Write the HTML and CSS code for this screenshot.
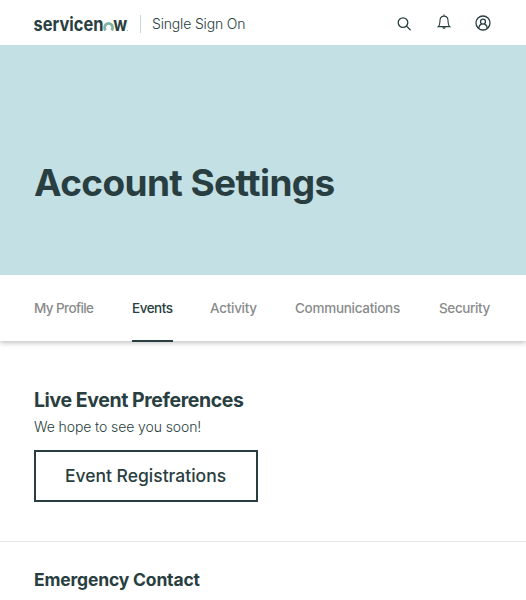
FILE: index.html
```html
<!DOCTYPE html>
<html lang="en">
<head>
<meta charset="utf-8">
<title>Account Settings</title>
<link rel="stylesheet" href="styles.css">
</head>
<body>
<header class="topbar">
  <svg class="logo" width="96" height="24" viewBox="0 0 96 24" aria-label="servicenow">
    <text class="logo-text" x="-0.5" y="18" textLength="70" lengthAdjust="spacingAndGlyphs">servicen</text>
    <path class="logo-o" d="M71.6 17.4A4 4.2 0 1 1 77.6 17.4"/>
    <text class="logo-text" x="79.2" y="18" textLength="14" lengthAdjust="spacingAndGlyphs">w</text>
    <circle class="logo-dot" cx="93.6" cy="17.5" r=".6"/>
  </svg>
  <span class="product">Single Sign On</span>
  <nav class="tools">
    <svg class="icon search" width="16" height="16" viewBox="0 0 16 16"><circle cx="7" cy="6.6" r="4.8"/><path d="M10.5 10.1L14.2 13.8"/></svg>
    <svg class="icon bell" width="16" height="16" viewBox="0 0 16 16"><path d="M8 .8V2M2.2 12.6C4.3 10.8 3.8 8.5 4 6.2C4.2 3.7 5.8 2.1 8 2.1S11.8 3.7 12 6.2C12.2 8.5 11.7 10.8 13.8 12.6Z"/><path class="solid" d="M6.3 13.2H9.7C9.4 15.4 6.6 15.4 6.3 13.2Z"/></svg>
    <svg class="icon user" width="16" height="16" viewBox="0 0 16 16"><circle cx="8" cy="8" r="7"/><circle cx="8" cy="6.6" r="2.5"/><path d="M3.7 13.2C4 10.7 5.2 9.4 6.5 8.8M9.5 8.8C10.8 9.4 12 10.7 12.3 13.2"/></svg>
  </nav>
</header>
<section class="hero"><h1>Account Settings</h1></section>
<nav class="tabs">
  <a class="tab profile">My Profile</a>
  <a class="tab active">Events</a>
  <a class="tab activity">Activity</a>
  <a class="tab comms">Communications</a>
  <a class="tab security">Security</a>
</nav>
<main>
  <section class="events">
    <h2>Live Event Preferences</h2>
    <p>We hope to see you soon!</p>
    <button class="registrations">Event Registrations</button>
  </section>
  <section class="contact"><h2>Emergency Contact</h2></section>
</main>
</body>
</html>
```
FILE: styles.css
```css
* { box-sizing: border-box; }
html { overflow: hidden; }
body { margin: 0; background: #fff; color: #293e40; font-family: Inter, "Liberation Sans", sans-serif; white-space: nowrap; }
h1, h2, p { margin: 0; }
.topbar { height: 45px; display: flex; align-items: center; padding: 0 35px 0 34px; }
.logo { display: block; flex: none; margin-top: 4px; }
.logo-text { font: 750 19px Inter, sans-serif; fill: #293e40; }
.logo-o { fill: none; stroke: #81b5a1; stroke-width: 2.8; }
.logo-dot { fill: #81b5a1; }
.product { height: 18px; line-height: 18px; margin: 2px 0 0 10px; padding-left: 11px; border-left: 1px solid #cbd6d5; font-size: 14px; font-weight: 300; letter-spacing: -.17px; }
.tools { display: flex; align-items: flex-start; gap: 24px; margin-left: auto; }
.icon { display: block; fill: none; stroke: #293e40; stroke-width: 1.3; stroke-linecap: round; }
.icon .solid { fill: #293e40; stroke: none; }
.search { margin-top: 2px; }
.bell { stroke-width: 1.1; margin-right: -1px; }
.user { margin-top: 1px; }
.hero { height: 230px; background: #c3e0e5; padding: 115px 0 0 34px; }
.hero h1 { font-size: 37px; line-height: 46px; font-weight: 650; letter-spacing: -.62px; }
.tabs { height: 66px; display: flex; padding-left: 34px; box-shadow: 0 2px 5px rgba(0,0,0,.24); clip-path: inset(0 0 -10px); }
.tab { height: 67px; line-height: 67px; font-size: 13.5px; font-weight: 550; color: #898b8b; }
.profile { width: 98px; letter-spacing: -.6px; }
.tab.active { width: 41px; margin-right: 37px; color: #293e40; border-bottom: 2px solid #293e40; letter-spacing: -.5px; }
.activity { width: 85px; letter-spacing: -.28px; }
.comms { width: 144px; letter-spacing: -.28px; }
.security { letter-spacing: -.38px; }
.events { height: 201px; padding: 46px 34px 0; border-bottom: 1px solid #e5e7e7; }
.events h2 { font-size: 19.5px; line-height: 26px; font-weight: 650; letter-spacing: -.41px; }
.events p { font-size: 14px; line-height: 20px; margin-top: 4px; font-weight: 300; letter-spacing: -.1px; }
.registrations { display: block; width: 224px; height: 52px; margin-top: 13px; padding: 0 1px 2px 0; border: 2px solid #293e40; background: #fff; color: #293e40; font: 550 17.5px Inter, sans-serif; }
.contact { padding: 26px 34px 0; }
.contact h2 { font-size: 17.5px; line-height: 24px; font-weight: 650; letter-spacing: -.17px; }
```
